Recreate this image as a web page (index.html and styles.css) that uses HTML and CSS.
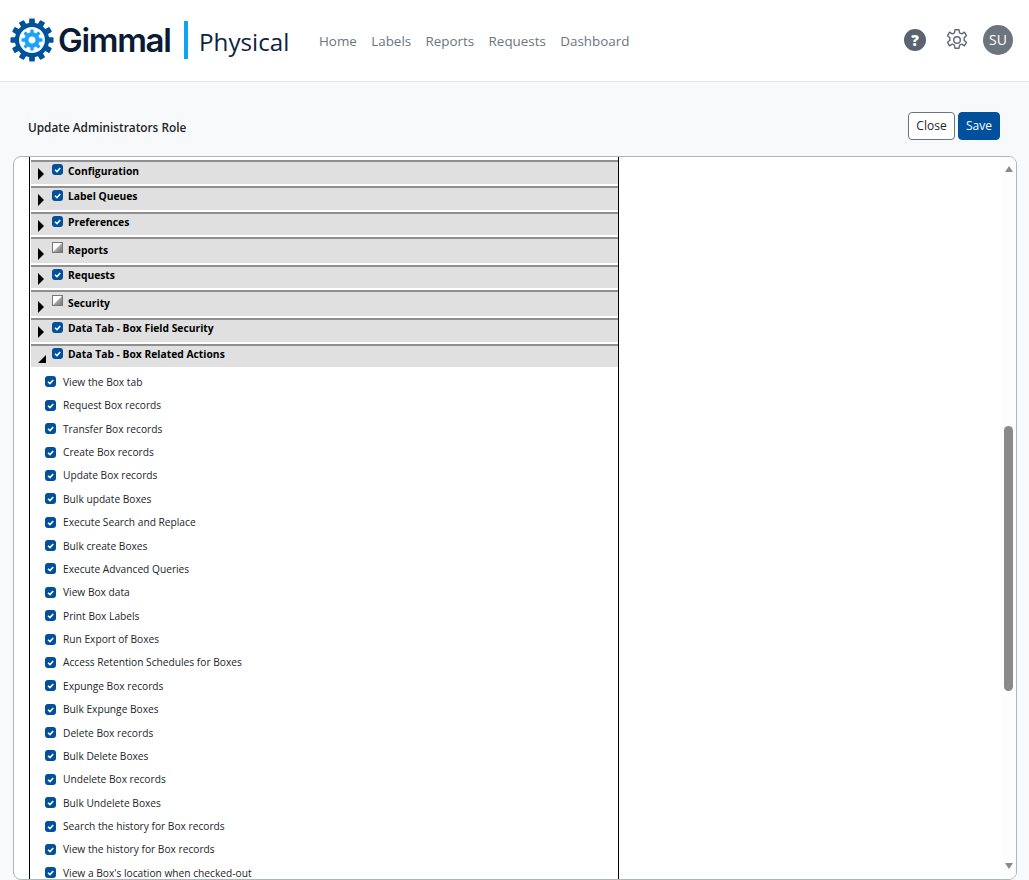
FILE: index.html
```html
<!DOCTYPE html>
<html lang="en">
<head>
<meta charset="utf-8">
<title>Update Administrators Role</title>
<link rel="stylesheet" href="styles.css">
</head>
<body>
<svg class="defs" width="0" height="0" aria-hidden="true"><defs>
<g id="tick"><path d="M3 5.7 L5 7.6 L8.2 3.9" fill="none" stroke="#fff" stroke-width="1.5"/></g>
</defs></svg>
<header class="topbar">
  <div class="brand">
    <svg class="gear" width="44" height="44" viewBox="-23 -23 46 46">
      <g fill="#00529b">
        <circle r="18"/>
        <g id="teeth">
          <rect x="-3" y="-22.5" width="6" height="45" rx="1"/>
          <rect x="-3" y="-22.5" width="6" height="45" rx="1" transform="rotate(30)"/>
          <rect x="-3" y="-22.5" width="6" height="45" rx="1" transform="rotate(60)"/>
          <rect x="-3" y="-22.5" width="6" height="45" rx="1" transform="rotate(90)"/>
          <rect x="-3" y="-22.5" width="6" height="45" rx="1" transform="rotate(120)"/>
          <rect x="-3" y="-22.5" width="6" height="45" rx="1" transform="rotate(150)"/>
        </g>
      </g>
      <circle r="13.5" fill="#fff"/>
      <g fill="#1ba4f7">
        <circle r="8"/>
        <rect x="-1.7" y="-11" width="3.4" height="22" rx=".6"/>
        <rect x="-1.7" y="-11" width="3.4" height="22" rx=".6" transform="rotate(45)"/>
        <rect x="-1.7" y="-11" width="3.4" height="22" rx=".6" transform="rotate(90)"/>
        <rect x="-1.7" y="-11" width="3.4" height="22" rx=".6" transform="rotate(135)"/>
      </g>
      <circle r="3.6" fill="#fff"/>
    </svg>
    <span class="brand-name">Gimmal</span>
    <span class="brand-bar"></span>
    <span class="brand-product">Physical</span>
  </div>
  <nav class="nav">
    <a>Home</a><a>Labels</a><a>Reports</a><a>Requests</a><a>Dashboard</a>
  </nav>
  <div class="tools">
    <span class="help">?</span>
    <svg class="cog" width="24" height="24" viewBox="0 0 24 24" fill="none" stroke="#5f6875" stroke-width="1.4" stroke-linejoin="round">
      <path d="M10 1.8h4l.6 3 2.2 1 2.6-1.600 2 3.500-2.300 2a7 7 0 0 1 0 2.600l2.300 2-2 3.500-2.600-1.600-2.200 1-.6 3h-4l-.6-3-2.200-1-2.600 1.600-2-3.500 2.300-2a7 7 0 0 1 0-2.600l-2.300-2 2-3.500 2.600 1.600 2.200-1z"/>
      <circle cx="12" cy="12" r="3.300"/>
    </svg>
    <span class="avatar">SU</span>
  </div>
</header>

<main class="page">
  <div class="titlebar">
    <h1 class="title">Update Administrators Role</h1>
    <div class="actions">
      <button class="btn btn-close">Close</button>
      <button class="btn btn-save">Save</button>
    </div>
  </div>
  <section class="panel">
    <div class="tree">
      <div class="group h26 first"><i class="arrow"></i><span class="cb"><svg viewBox="0 0 11 11"><use href="#tick"/></svg></span><b>Configuration</b></div>
      <div class="group h26"><i class="arrow"></i><span class="cb"><svg viewBox="0 0 11 11"><use href="#tick"/></svg></span><b>Label Queues</b></div>
      <div class="group h25"><i class="arrow"></i><span class="cb"><svg viewBox="0 0 11 11"><use href="#tick"/></svg></span><b>Preferences</b></div>
      <div class="group h28"><i class="arrow"></i><span class="cb mixed"></span><b>Reports</b></div>
      <div class="group h25"><i class="arrow"></i><span class="cb"><svg viewBox="0 0 11 11"><use href="#tick"/></svg></span><b>Requests</b></div>
      <div class="group h28"><i class="arrow"></i><span class="cb mixed"></span><b>Security</b></div>
      <div class="group h26"><i class="arrow"></i><span class="cb"><svg viewBox="0 0 11 11"><use href="#tick"/></svg></span><b>Data Tab - Box Field Security</b></div>
      <div class="group h26 open"><i class="arrow"></i><span class="cb"><svg viewBox="0 0 11 11"><use href="#tick"/></svg></span><b>Data Tab - Box Related Actions</b></div>
      <ul class="items">
        <li><span class="cb"><svg viewBox="0 0 11 11"><use href="#tick"/></svg></span>View the Box tab</li>
        <li><span class="cb"><svg viewBox="0 0 11 11"><use href="#tick"/></svg></span>Request Box records</li>
        <li><span class="cb"><svg viewBox="0 0 11 11"><use href="#tick"/></svg></span>Transfer Box records</li>
        <li><span class="cb"><svg viewBox="0 0 11 11"><use href="#tick"/></svg></span>Create Box records</li>
        <li><span class="cb"><svg viewBox="0 0 11 11"><use href="#tick"/></svg></span>Update Box records</li>
        <li><span class="cb"><svg viewBox="0 0 11 11"><use href="#tick"/></svg></span>Bulk update Boxes</li>
        <li><span class="cb"><svg viewBox="0 0 11 11"><use href="#tick"/></svg></span>Execute Search and Replace</li>
        <li><span class="cb"><svg viewBox="0 0 11 11"><use href="#tick"/></svg></span>Bulk create Boxes</li>
        <li><span class="cb"><svg viewBox="0 0 11 11"><use href="#tick"/></svg></span>Execute Advanced Queries</li>
        <li><span class="cb"><svg viewBox="0 0 11 11"><use href="#tick"/></svg></span>View Box data</li>
        <li><span class="cb"><svg viewBox="0 0 11 11"><use href="#tick"/></svg></span>Print Box Labels</li>
        <li><span class="cb"><svg viewBox="0 0 11 11"><use href="#tick"/></svg></span>Run Export of Boxes</li>
        <li><span class="cb"><svg viewBox="0 0 11 11"><use href="#tick"/></svg></span>Access Retention Schedules for Boxes</li>
        <li><span class="cb"><svg viewBox="0 0 11 11"><use href="#tick"/></svg></span>Expunge Box records</li>
        <li><span class="cb"><svg viewBox="0 0 11 11"><use href="#tick"/></svg></span>Bulk Expunge Boxes</li>
        <li><span class="cb"><svg viewBox="0 0 11 11"><use href="#tick"/></svg></span>Delete Box records</li>
        <li><span class="cb"><svg viewBox="0 0 11 11"><use href="#tick"/></svg></span>Bulk Delete Boxes</li>
        <li><span class="cb"><svg viewBox="0 0 11 11"><use href="#tick"/></svg></span>Undelete Box records</li>
        <li><span class="cb"><svg viewBox="0 0 11 11"><use href="#tick"/></svg></span>Bulk Undelete Boxes</li>
        <li><span class="cb"><svg viewBox="0 0 11 11"><use href="#tick"/></svg></span>Search the history for Box records</li>
        <li><span class="cb"><svg viewBox="0 0 11 11"><use href="#tick"/></svg></span>View the history for Box records</li>
        <li><span class="cb"><svg viewBox="0 0 11 11"><use href="#tick"/></svg></span>View a Box's location when checked-out</li>
      </ul>
    </div>
    <div class="scrollbar">
      <span class="sb-up"></span>
      <span class="sb-thumb"></span>
      <span class="sb-down"></span>
    </div>
  </section>
</main>
</body>
</html>
```
FILE: styles.css
```css
* { box-sizing: border-box; }
html, body { height: 100%; }
body {
  margin: 0;
  height: 880px;
  overflow: hidden;
  background: #f8f9fa;
  font-family: "Open Sans", "Noto Sans", sans-serif;
  color: #212529;
}
.defs { position: absolute; }

.topbar {
  height: 82px;
  background: #fff;
  border-bottom: 1px solid #e1e3e6;
  display: flex;
  align-items: center;
  padding: 0 16px 2px 9px;
}
.brand { display: flex; align-items: center; width: 310px; flex: none; }
.gear { flex: none; margin-left: .5px; }
.brand-name {
  margin: 1px 0 0 4.500px;
  width: 113px;
  font: 600 33px/1 Inter, sans-serif;
  letter-spacing: -1.3px;
  color: #0b1b33;
}
.brand-bar { width: 4px; height: 38px; margin-left: 13px; background: #0ea5f5; }
.brand-product {
  margin: 6px 0 0 11px;
  font-size: 24.200px;
  line-height: 1;
  color: #0d2340;
}
.nav { display: flex; gap: 14.400px; margin-top: 3px; font-size: 13.400px; color: #6c757d; }
.tools { margin-left: auto; display: flex; align-items: center; }
.help {
  width: 22px; height: 22px;
  border-radius: 50%;
  background: #5c6370;
  color: #fff;
  font: 800 15px/22px "Open Sans", sans-serif;
  text-align: center;
}
.cog { margin-left: 19px; }
.avatar {
  margin-left: 14px;
  width: 30px; height: 30px;
  border-radius: 50%;
  background: #6c757d;
  color: #fff;
  font-size: 14px;
  line-height: 30px;
  text-align: center;
}

.page { padding: 0 12px 0 13px; }
.titlebar {
  height: 74px;
  display: flex;
  align-items: center;
  justify-content: space-between;
  padding: 14px 17px 0 15px;
}
.title { margin: 1px 0 0; font-size: 11.800px; font-weight: 600; color: #212529; }
.actions { display: flex; gap: 3px; }
.btn {
  height: 28px;
  border-radius: 4px;
  font: 400 12px/1 "Open Sans", sans-serif;
  padding: 0;
}
.btn-close { width: 47px; background: #fff; border: 1px solid #6c757d; color: #212529; }
.btn-save { width: 42px; background: #00509d; border: 1px solid #00509d; color: #fff; }

.panel {
  height: 724px;
  background: #fff;
  border: 1px solid #adb5bd;
  border-radius: 8px;
  display: flex;
  overflow: hidden;
}
.tree {
  margin-left: 15px;
  width: 590px;
  height: 740px;
  border-left: 1px solid #000;
  border-right: 1px solid #000;
  padding: 3px 0 0 1px;
  flex: none;
}
.group {
  display: flex;
  align-items: flex-start;
  background: #e0e0e0;
  border-top: 2px solid #8f8f8f;
  font-size: 10.300px;
  color: #000;
  margin-bottom: 2px;
}
.group b { font-weight: 700; line-height: 16px; }
.first b { padding-top: 1px; }
.h26 { height: 24px; }
.h25 { height: 23px; }
.h28 { height: 26px; }
.h28 b { padding-top: 3px; }
.group.open { margin-bottom: 0; height: 23px; }
.arrow {
  flex: none;
  width: 0; height: 0;
  margin: 6px 7px 0 7px;
  border-style: solid;
  border-width: 6px 0 6px 6px;
  border-color: transparent transparent transparent #000;
}
.h28 .arrow { margin-top: 9px; }
.open .arrow {
  margin: 9px 5px 0 7px;
  border-width: 0 0 8px 8px;
  border-color: transparent transparent #000 transparent;
}
.cb {
  flex: none;
  width: 11px; height: 11px;
  border-radius: 3px;
  background: #00509d;
  display: block;
}
.cb svg { display: block; width: 11px; height: 11px; }
.group .cb { margin: 2px 5px 0 1px; }
.group .cb.mixed {
  margin-top: 3px;
  border-radius: 0;
  background: linear-gradient(135deg, #fff 0 44%, #a3a3a3 56%, #777 100%);
  border: 1px solid #777;
}
.items {
  list-style: none;
  margin: 0;
  padding: 3.300px 0 0 14px;
}
.items li {
  height: 23.380px;
  display: flex;
  align-items: center;
  gap: 7px;
  font-size: 10.200px;
  color: #212529;
  white-space: nowrap;
}
.scrollbar {
  margin-left: auto;
  width: 15px;
  display: flex;
  flex-direction: column;
  align-items: center;
  background: #fdfdfd;
  position: relative;
}
.sb-up {
  margin-top: 9px;
  width: 0; height: 0;
  border-style: solid;
  border-width: 0 4.500px 6px;
  border-color: transparent transparent #8a8a8a;
}
.sb-thumb {
  margin-top: 254px;
  width: 9px;
  height: 265px;
  border-radius: 4.500px;
  background: #8a8a8a;
}
.sb-down {
  margin-top: 172px;
  width: 0; height: 0;
  border-style: solid;
  border-width: 6px 4.500px 0;
  border-color: #8a8a8a transparent transparent;
}
```
